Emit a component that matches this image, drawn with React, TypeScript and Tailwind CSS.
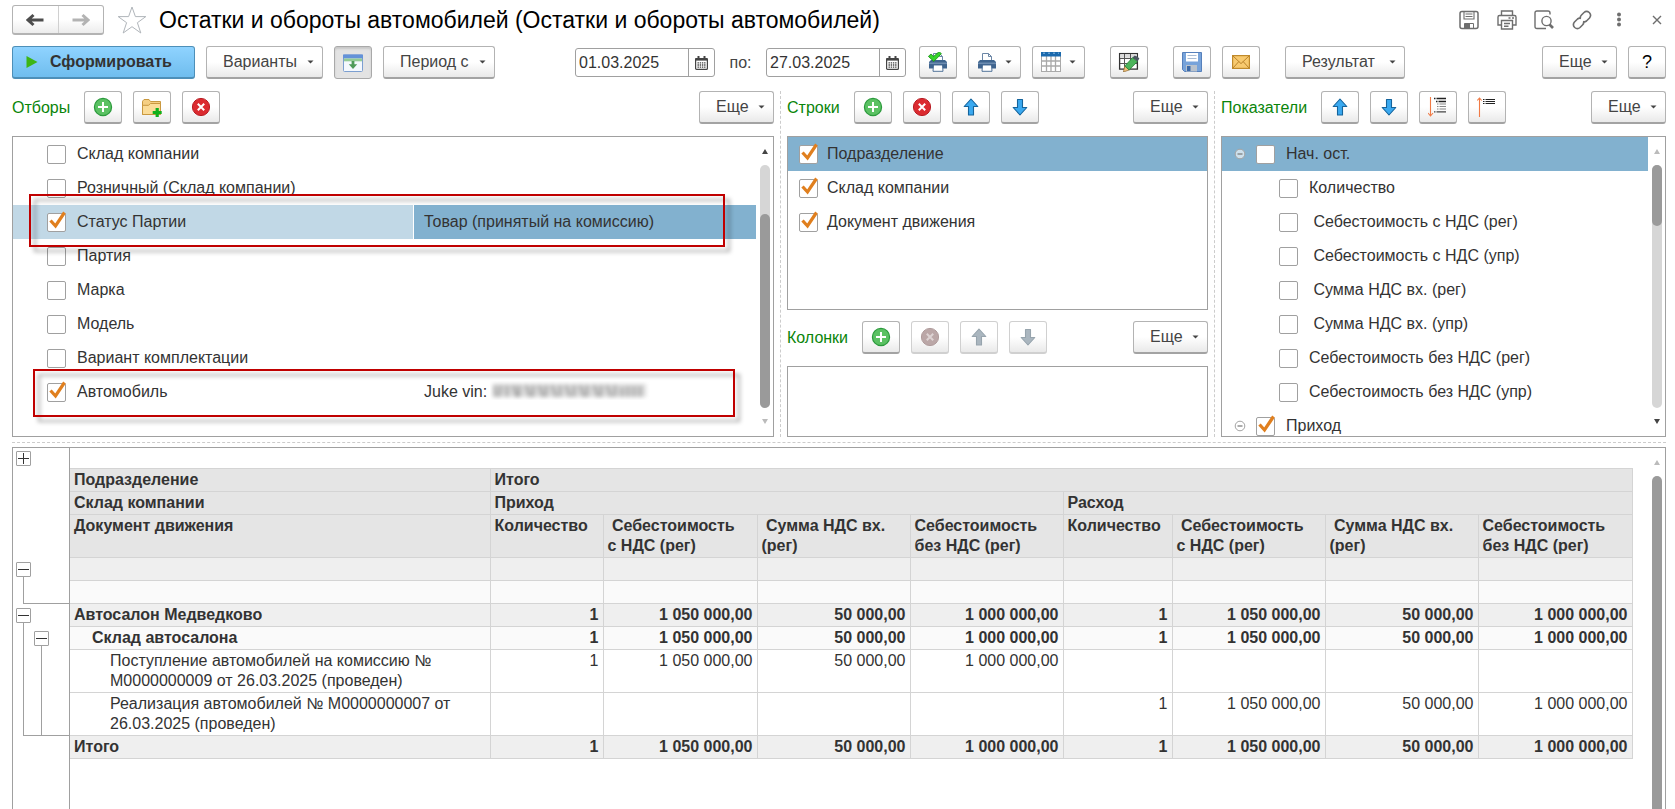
import type { ReactNode } from 'react';
import clsx from 'clsx';

const NBSP = '\u00a0';

/* ---------- icons ---------- */

function PlusIcon() {
  return (
    <svg width="20" height="20" viewBox="0 0 20 20" aria-hidden="true">
      <circle cx="10" cy="10" r="8.6" fill="#5bc163" stroke="#2b9a3c" strokeWidth="1.2" />
      <path d="M10 5V15M5 10H15" stroke="#fff" strokeWidth="2" />
    </svg>
  );
}

function DeleteIcon({ muted }: { muted?: boolean }) {
  return (
    <svg width="20" height="20" viewBox="0 0 20 20" aria-hidden="true">
      <circle
        cx="10"
        cy="10"
        r="8.6"
        fill={muted ? '#bba7a7' : '#db2b30'}
        stroke={muted ? '#b09c9c' : '#b81d24'}
        strokeWidth="1"
      />
      <path d="M6.8 6.8L13.2 13.2M13.2 6.8L6.8 13.2" stroke={muted ? '#ddd3d3' : '#fff'} strokeWidth="2" />
    </svg>
  );
}

function ArrowIcon({ down, muted }: { down?: boolean; muted?: boolean }) {
  return (
    <svg width="20" height="20" viewBox="0 0 20 20" aria-hidden="true">
      <path
        d={
          down
            ? 'M7.5 2.5H12.5V10.5H16.8L10 18L3.2 10.5H7.5Z'
            : 'M7.5 18H12.5V9.5H16.8L10 2L3.2 9.5H7.5Z'
        }
        fill={muted ? '#aab6bf' : '#3aa9f0'}
        stroke={muted ? '#97a4ad' : '#15649c'}
        strokeWidth="1.1"
        strokeLinejoin="round"
      />
    </svg>
  );
}

function FolderAddIcon() {
  return (
    <svg width="20" height="20" viewBox="0 0 20 20" aria-hidden="true">
      <path d="M0.5 17.5V4.2L2 2.5H7L8.5 4.5H18.5V17.5Z" fill="#f5cf83" stroke="#c9983f" />
      <path d="M0.5 17.5V8.3H6.5L8.5 6.5H18.5V17.5Z" fill="#fbdc98" stroke="#c9983f" />
      <path d="M15.2 11V20M10.7 15.5H19.7" stroke="#12b01c" strokeWidth="3.2" />
    </svg>
  );
}

function PanelDownIcon() {
  return (
    <svg width="20" height="20" viewBox="0 0 20 20" aria-hidden="true">
      <rect x="0.5" y="2" width="19" height="16.5" rx="1" fill="#f4f8fd" stroke="#7c9fd0" />
      <rect x="0" y="1.5" width="20" height="4" fill="#6492d8" />
      <rect x="1" y="5.5" width="18" height="2.8" fill="#93cb95" />
      <path d="M8.6 8H11.4V11.2H14.2L10 16L5.8 11.2H8.6Z" fill="#4f9a5a" />
    </svg>
  );
}

function CalendarIcon() {
  return (
    <svg width="13" height="14" viewBox="0 0 13 14" aria-hidden="true">
      <rect x="0.6" y="2.5" width="11.8" height="10.9" rx="1" fill="#fff" stroke="#444" strokeWidth="1.2" />
      <rect x="0.5" y="2" width="12" height="2.6" fill="#444" />
      <path d="M3.5 0V3M9.5 0V3" stroke="#444" strokeWidth="2" />
      <path d="M2.5 6.8H10.5M2.5 9H10.5M2.5 11.2H10.5" stroke="#444" strokeWidth="1.3" strokeDasharray="1.4 0.8" />
    </svg>
  );
}

function PrinterIcon({ check }: { check?: boolean }) {
  return (
    <svg width="20" height="20" viewBox="0 0 20 20" aria-hidden="true">
      <path d="M5.5 9V1.5H11.5L14.5 4.5V9" fill="#fff" stroke="#6b86a6" />
      <path d="M11.5 1.5V4.5H14.5" fill="none" stroke="#6b86a6" />
      <path d="M3 8H17L19 10V16.5H1V10Z" fill="#3f648e" />
      <rect x="1" y="10.5" width="18" height="1.6" fill="#6d8cb0" />
      <path d="M5.5 13H14.5L15 19.3H5Z" fill="#fff" stroke="#3f648e" strokeWidth="0.9" />
      {check && (
        <path d="M0.4 4.4L3 2L5.6 4.4L11.2 -0.4L13.4 1.8L5.8 9.4Z" fill="#35d32a" stroke="#148d12" strokeWidth="0.8" />
      )}
    </svg>
  );
}

function TableIcon() {
  return (
    <svg width="20" height="20" viewBox="0 0 20 20" aria-hidden="true">
      <rect x="0.5" y="0.5" width="19" height="19" fill="#fff" stroke="#a9a9a9" />
      <path d="M5.5 4V20M10 4V20M14.5 4V20M0 9H20M0 14H20" stroke="#a9a9a9" strokeWidth="1.3" />
      <rect x="0" y="0" width="20" height="4.5" fill="#1a69ad" />
      <path d="M2 1.2H18" stroke="#8bb9e0" strokeDasharray="2 3" />
    </svg>
  );
}

function TableEditIcon() {
  return (
    <svg width="22" height="20" viewBox="0 0 22 20" aria-hidden="true">
      <rect x="1.6" y="1.6" width="17.8" height="15.5" fill="#fff" stroke="#333" strokeWidth="1.3" />
      <rect x="2.2" y="2.2" width="16.6" height="3.6" fill="#dcdcdc" />
      <path d="M2 6.5H19M2 11.5H19M6.5 2V17M12.5 2V17" stroke="#555" />
      <path d="M5.4 20L6.8 14L11.2 18Z" fill="#f2c078" stroke="#8d6a34" strokeWidth="0.7" />
      <path d="M6.8 14L14.6 5.6L19.4 9.6L11.2 18Z" fill="#4cb45b" stroke="#2b7f39" strokeWidth="0.8" />
      <path d="M14.6 5.6L16.4 3.8Q19 3.4 21.4 6.6L19.4 9.6Z" fill="#4a5560" />
    </svg>
  );
}

function DisketteIcon() {
  return (
    <svg width="20" height="20" viewBox="0 0 20 20" aria-hidden="true">
      <path d="M0.5 0.5H19.5V19.5H2.5L0.5 17.5Z" fill="#77a3da" stroke="#5680bb" />
      <rect x="4" y="1" width="12" height="8.5" fill="#fff" />
      <path d="M5.5 3.5H14.5M5.5 6.5H14.5" stroke="#a9bcd4" />
      <rect x="4" y="13" width="11" height="6.5" fill="#b9c2cc" />
      <rect x="5" y="14" width="3.5" height="5" fill="#3d6aa8" />
    </svg>
  );
}

function MailIcon() {
  return (
    <svg width="18" height="14" viewBox="0 0 18 14" aria-hidden="true">
      <rect x="0.6" y="0.6" width="16.8" height="12.8" fill="#f8ca6f" stroke="#c08a2b" strokeWidth="1.2" />
      <path d="M0.8 0.8L9 8.6L17.2 0.8M0.8 13.2L6.8 6.6M17.2 13.2L11.2 6.6" fill="none" stroke="#b9822a" />
    </svg>
  );
}

function ExpandLevelsIcon() {
  return (
    <svg width="20" height="20" viewBox="0 0 20 20" aria-hidden="true">
      <path d="M2.5 0V19M0 16L2.5 19L5 16" fill="none" stroke="#f07a45" strokeWidth="1.1" />
      <path d="M6 1.5H7.5M8.5 1.5H18M8 4.5H9.5M10.5 4.5H18" stroke="#222" strokeWidth="1.3" />
      <path d="M9 7H10.5M11.5 7H18M9 9.5H10.5M11.5 9.5H18M9 12H10.5M11.5 12H18" stroke="#888" strokeWidth="1.2" />
      <path d="M6 14.8H7.5M8.5 14.8H18" stroke="#444" strokeWidth="1.2" />
    </svg>
  );
}

function CollapseLevelsIcon() {
  return (
    <svg width="20" height="20" viewBox="0 0 20 20" aria-hidden="true">
      <path d="M2.5 20V1M0.3 3.5L2.5 1L4.7 3.5" fill="none" stroke="#f07a45" strokeWidth="1.1" />
      <path d="M6 2.5H7.5M8.5 2.5H18M6 4.5H7.5M8.5 4.5H18M6 6.5H7.5M8.5 6.5H18" stroke="#222" strokeWidth="1" />
    </svg>
  );
}

function CollapseDot() {
  return (
    <svg width="12" height="12" viewBox="0 0 12 12" aria-hidden="true">
      <circle cx="6" cy="6" r="4.8" fill="#fff" fillOpacity="0.6" stroke="#a3a3a3" />
      <path d="M3.5 6H8.5" stroke="#777" strokeWidth="1.2" />
    </svg>
  );
}

function Caret() {
  return (
    <svg width="7" height="4" viewBox="0 0 7 4" aria-hidden="true">
      <path d="M0.5 0.5H6.5L3.5 3.5Z" fill="#444" />
    </svg>
  );
}

/* ---------- controls ---------- */

function Button({
  children,
  label,
  width = 'w-[38px]',
  menu,
  muted,
}: {
  children: ReactNode;
  label?: string;
  width?: string;
  menu?: boolean;
  muted?: boolean;
}) {
  return (
    <button
      type="button"
      aria-label={label}
      disabled={muted}
      className={clsx(
        'flex h-[33px] shrink-0 items-center rounded-[3px] border border-b-2 bg-linear-to-b from-white from-50% to-[#e9e9e9] text-[#444]',
        width,
        menu ? 'justify-between pr-2 pl-4' : 'justify-center',
        muted ? 'border-[#d0d0d0]' : 'border-[#b3b3b3] border-b-[#a3a3a3]',
      )}
    >
      {children}
      {menu && <Caret />}
    </button>
  );
}

function MoreButton() {
  return (
    <Button width="w-[75px]" menu>
      Еще
    </Button>
  );
}

function IconMenuButton({ children, label }: { children: ReactNode; label: string }) {
  return (
    <button
      type="button"
      aria-label={label}
      className="flex h-[33px] w-[53px] shrink-0 items-center justify-between rounded-[3px] border border-b-2 border-[#b3b3b3] border-b-[#a3a3a3] bg-linear-to-b from-white from-50% to-[#e9e9e9] pr-2 pl-2"
    >
      {children}
      <Caret />
    </button>
  );
}

function DateField({ value, label }: { value: string; label: string }) {
  return (
    <div className="flex h-[29px] w-[140px] shrink-0 rounded-[3px] border border-[#a0a0a0] bg-white">
      <input type="text" aria-label={label} defaultValue={value} className="w-0 flex-1 px-[3px] text-[#333] outline-none" />
      <button type="button" aria-label="Календарь" className="flex w-[26px] items-center justify-center border-l border-[#a0a0a0]">
        <CalendarIcon />
      </button>
    </div>
  );
}

function Checkbox({ id, checked }: { id: string; checked?: boolean }) {
  return (
    <span className="relative flex size-[19px] shrink-0">
      <input
        id={id}
        type="checkbox"
        defaultChecked={checked}
        className="peer size-[19px] appearance-none rounded-[2px] border border-[#a0a0a0] bg-white"
      />
      <svg
        width="19"
        height="21"
        viewBox="0 0 19 21"
        aria-hidden="true"
        className="pointer-events-none absolute bottom-0 left-0 hidden peer-checked:block"
      >
        <path d="M3.5 9.5L8.5 15L17.5 1.5" fill="none" stroke="#e07f1e" strokeWidth="3.2" />
      </svg>
    </span>
  );
}

function Scrollbar({
  thumb,
  up,
  down,
}: {
  thumb: string;
  up?: boolean;
  down?: boolean;
}) {
  return (
    <div className="flex w-[17px] shrink-0 flex-col items-center pt-3 pb-3" aria-hidden="true">
      <svg width="6" height="5" viewBox="0 0 6 5">
        <path d="M3 0L6 5H0Z" fill={up ? '#444' : '#bbb'} />
      </svg>
      <div className="my-[11px] flex w-[10px] flex-1 flex-col rounded-full bg-[#d6d6d6]">
        <div className={clsx('rounded-full bg-[#9a9a9a]', thumb)} />
      </div>
      <svg width="6" height="5" viewBox="0 0 6 5">
        <path d="M3 5L6 0H0Z" fill={down ? '#444' : '#bbb'} />
      </svg>
    </div>
  );
}

function SectionTitle({ children }: { children: ReactNode }) {
  return <h2 className="shrink-0 text-[#0a850a]">{children}</h2>;
}

/* ---------- header ---------- */

function TitleBar() {
  return (
    <header className="flex items-center pt-[5px]">
      <div className="flex h-[30px] w-[92px] rounded-[3px] border border-b-2 border-[#b3b3b3] bg-linear-to-b from-white from-50% to-[#ececec]">
        <button type="button" aria-label="Назад" className="flex flex-1 items-center justify-center border-r border-[#d0d0d0]">
          <svg width="18" height="14" viewBox="0 0 18 14" aria-hidden="true">
            <path d="M17.5 7H3M7.5 2L2 7L7.5 12" fill="none" stroke="#4d4d4d" strokeWidth="3" />
          </svg>
        </button>
        <button type="button" aria-label="Вперед" className="flex flex-1 items-center justify-center">
          <svg width="18" height="14" viewBox="0 0 18 14" aria-hidden="true">
            <path d="M0.5 7H15M10.5 2L16 7L10.5 12" fill="none" stroke="#b3b3b3" strokeWidth="3" />
          </svg>
        </button>
      </div>
      <button type="button" aria-label="Избранное" className="ml-[13px]">
        <svg width="30" height="30" viewBox="0 0 30 30" aria-hidden="true">
          <path
            d="M15 2L18.4 11.6H28.8L20.4 17.7L23.8 28L15 21.7L6.2 28L9.6 17.7L1.2 11.6H11.6Z"
            fill="#fff"
            stroke="#b0b5ba"
          />
        </svg>
      </button>
      <h1 className="ml-3 text-[23px] leading-[30px] text-black">
        Остатки и обороты автомобилей (Остатки и обороты автомобилей)
      </h1>
      <div className="ml-auto flex items-center text-[#6e6e6e]">
        <button type="button" aria-label="Сохранить">
          <svg width="20" height="20" viewBox="0 0 20 20" fill="none" stroke="currentColor" aria-hidden="true">
            <rect x="1" y="1.5" width="18" height="17" rx="2" strokeWidth="1.5" />
            <path d="M5 2V9H15V2M6.5 4H13.5M6.5 6.5H13.5" strokeWidth="1.1" />
            <path d="M5.5 18V13.5H14.5V18" />
            <rect x="6" y="14" width="4.5" height="4" fill="currentColor" />
          </svg>
        </button>
        <button type="button" aria-label="Печать" className="ml-[18px]">
          <svg width="20" height="20" viewBox="0 0 20 20" fill="none" stroke="currentColor" strokeWidth="1.4" aria-hidden="true">
            <path d="M4.5 5V1H15.5V5" />
            <path d="M4.5 15H1V7Q1 5.5 2.5 5.5H17.5Q19 5.5 19 7V15H15.5" />
            <path d="M4.5 10.5H15.5V19H4.5ZM7 13.5H13M7 16.2H11.5M11.5 8H13.5M15 8H17" />
          </svg>
        </button>
        <button type="button" aria-label="Просмотр" className="ml-[17px]">
          <svg width="20" height="20" viewBox="0 0 20 20" fill="none" stroke="currentColor" strokeWidth="1.4" aria-hidden="true">
            <path d="M12 18.5H3Q1 18.5 1 16.5V3Q1 1 3 1H14Q16 1 16 3V4.5" />
            <circle cx="12.5" cy="11" r="4.6" />
            <path d="M15.5 14.5L19 18" strokeWidth="2.6" />
          </svg>
        </button>
        <button type="button" aria-label="Ссылка" className="ml-[18px]">
          <svg width="20" height="20" viewBox="0 0 20 20" fill="none" stroke="currentColor" strokeWidth="1.6" aria-hidden="true">
            <path d="M8.3 8.2Q8 6.5 9.5 5L12 2.5Q14.5 0.2 17.3 2.5Q19.8 5.2 17.5 8L14.5 11Q12.8 12.3 11 11.6" />
            <path d="M11.7 11.8Q12 13.5 10.5 15L8 17.5Q5.5 19.8 2.7 17.5Q0.2 14.8 2.5 12L5.5 9Q7.2 7.7 9 8.4" />
          </svg>
        </button>
        <button type="button" aria-label="Меню" className="ml-6">
          <svg width="6" height="16" viewBox="0 0 6 16" fill="currentColor" aria-hidden="true">
            <circle cx="3" cy="2.5" r="2" />
            <circle cx="3" cy="7.5" r="2" />
            <circle cx="3" cy="12.5" r="2" />
          </svg>
        </button>
        <button type="button" aria-label="Закрыть" className="mr-1 ml-[30px]">
          <svg width="10" height="10" viewBox="0 0 10 10" stroke="currentColor" strokeWidth="1.4" aria-hidden="true">
            <path d="M1 1L9 9M9 1L1 9" />
          </svg>
        </button>
      </div>
    </header>
  );
}

function Toolbar() {
  return (
    <div className="mt-[11px] flex items-center">
      <button
        type="button"
        className="flex h-[33px] w-[183px] shrink-0 items-center rounded-[3px] border border-b-2 border-[#4d8fb8] bg-linear-to-b from-[#8fd3ff] to-[#6fbdee] pl-[13px] font-bold text-[#333]"
      >
        <svg width="12" height="14" viewBox="0 0 12 14" aria-hidden="true">
          <path d="M0.5 1L11.5 7L0.5 13Z" fill="#3db515" />
        </svg>
        <span className="ml-3">Сформировать</span>
      </button>
      <div className="ml-[11px] flex gap-[11px]">
        <Button width="w-[117px]" menu>
          Варианты
        </Button>
        <button
          type="button"
          aria-label="Показать настройки"
          className="flex h-[33px] w-[38px] items-center justify-center rounded-[3px] border border-[#a9a9a9] bg-[#e3e3e3] shadow-[inset_0_2px_2px_#c8c8c8]"
        >
          <PanelDownIcon />
        </button>
        <Button width="w-[112px]" menu>
          Период с
        </Button>
      </div>
      <div className="ml-20 flex items-center">
        <DateField value="01.03.2025" label="Период с" />
        <span className="w-[51px] text-center text-[#444]">по:</span>
        <DateField value="27.03.2025" label="Период по" />
      </div>
      <div className="ml-[13px] flex gap-[11px]">
        <Button label="Быстрая печать">
          <PrinterIcon check />
        </Button>
        <IconMenuButton label="Печать">
          <PrinterIcon />
        </IconMenuButton>
        <IconMenuButton label="Таблица">
          <TableIcon />
        </IconMenuButton>
      </div>
      <div className="ml-[25px] flex">
        <Button label="Редактировать">
          <TableEditIcon />
        </Button>
      </div>
      <div className="ml-[25px] flex gap-[11px]">
        <Button label="Сохранить">
          <DisketteIcon />
        </Button>
        <Button label="Отправить">
          <MailIcon />
        </Button>
      </div>
      <div className="ml-[25px] flex">
        <Button width="w-[120px]" menu>
          Результат
        </Button>
      </div>
      <div className="ml-auto flex gap-[11px]">
        <MoreButton />
        <Button label="Справка">
          <span className="text-[18px] text-black">?</span>
        </Button>
      </div>
    </div>
  );
}

/* ---------- settings panels ---------- */

interface FilterItem {
  name: string;
  checked?: boolean;
  selected?: boolean;
  value?: string;
  masked?: boolean;
}

const filters: FilterItem[] = [
  { name: 'Склад компании' },
  { name: 'Розничный (Склад компании)' },
  { name: 'Статус Партии', checked: true, selected: true, value: 'Товар (принятый на комиссию)' },
  { name: 'Партия' },
  { name: 'Марка' },
  { name: 'Модель' },
  { name: 'Вариант комплектации' },
  { name: 'Автомобиль', checked: true, value: 'Juke vin:', masked: true },
];

function MaskedVin() {
  return (
    <svg width="160" height="22" viewBox="0 0 160 22" className="ml-[3px]" aria-hidden="true">
      <defs>
        <filter id="vin-blur" x="-5%" y="-20%" width="110%" height="140%">
          <feGaussianBlur stdDeviation="2" />
        </filter>
      </defs>
      <g filter="url(#vin-blur)">
        <rect x="3" y="3" width="153" height="13" fill="#dadada" />
        <path
          d="M5 4V16M11 4L9 16M17 4V16M23 4L27 16M29 4V16M36 4L40 16M43 4V16M49 4L53 16M56 4V16M62 4L66 16M70 4V16M76 4L80 16M84 4V16M90 4L94 16M97 4V16M104 4L108 16M111 4V16M117 4L121 16M125 4V16M132 6V16M138 5V16M144 5V16M150 5V16"
          stroke="#999"
          strokeWidth="2.4"
        />
      </g>
    </svg>
  );
}

function FiltersPanel() {
  return (
    <section className="flex flex-col">
      <div className="flex items-center">
        <SectionTitle>Отборы</SectionTitle>
        <div className="ml-[14px] flex gap-[11px]">
          <Button label="Добавить">
            <PlusIcon />
          </Button>
          <Button label="Добавить группу">
            <FolderAddIcon />
          </Button>
          <Button label="Удалить">
            <DeleteIcon />
          </Button>
        </div>
        <div className="ml-auto">
          <MoreButton />
        </div>
      </div>
      <div className="relative mt-3 flex h-[301px] border border-[#a0a0a0]">
        <ul className="min-w-0 flex-1">
          {filters.map((item, index) => (
            <li key={item.name} className="grid h-[34px] grid-cols-[400fr_343fr]">
              <div className={clsx('flex items-center pl-[34px]', item.selected && 'bg-[#c1d8e6]')}>
                <Checkbox id={`filter-${index}`} checked={item.checked} />
                <label htmlFor={`filter-${index}`} className="ml-[11px]">
                  {item.name}
                </label>
              </div>
              <div
                className={clsx(
                  'flex items-center border-l border-white pl-[10px]',
                  item.selected && 'bg-[#82b1cf]',
                )}
              >
                {item.value}
                {item.masked && <MaskedVin />}
              </div>
            </li>
          ))}
        </ul>
        <Scrollbar thumb="mt-auto h-4/5" up />
        {/* highlight frames drawn over the list */}
        <div className="pointer-events-none absolute top-[57px] right-12 left-4 h-[53px] border-2 border-[#c00000] drop-shadow-[5px_5px_2px_rgba(0,0,0,0.35)]" />
        <div className="pointer-events-none absolute top-[232px] right-[38px] left-5 h-12 border-2 border-[#c00000] drop-shadow-[5px_5px_2px_rgba(0,0,0,0.35)]" />
      </div>
    </section>
  );
}

const rowFields = ['Подразделение', 'Склад компании', 'Документ движения'];

function RowsPanel() {
  return (
    <section className="flex flex-col">
      <div className="flex items-center">
        <SectionTitle>Строки</SectionTitle>
        <div className="ml-[14px] flex gap-[11px]">
          <Button label="Добавить строку">
            <PlusIcon />
          </Button>
          <Button label="Удалить строку">
            <DeleteIcon />
          </Button>
          <Button label="Выше">
            <ArrowIcon />
          </Button>
          <Button label="Ниже">
            <ArrowIcon down />
          </Button>
        </div>
        <div className="ml-auto">
          <MoreButton />
        </div>
      </div>
      <ul className="mt-3 h-[174px] border border-[#a0a0a0]">
        {rowFields.map((name, index) => (
          <li key={name} className={clsx('flex h-[34px] items-center pl-[11px]', index === 0 && 'bg-[#82b1cf]')}>
            <Checkbox id={`row-${index}`} checked />
            <label htmlFor={`row-${index}`} className="ml-[9px]">
              {name}
            </label>
          </li>
        ))}
      </ul>
      <div className="mt-[11px] flex items-center">
        <SectionTitle>Колонки</SectionTitle>
        <div className="ml-[14px] flex gap-[11px]">
          <Button label="Добавить колонку">
            <PlusIcon />
          </Button>
          <Button label="Удалить колонку" muted>
            <DeleteIcon muted />
          </Button>
          <Button label="Колонка выше" muted>
            <ArrowIcon muted />
          </Button>
          <Button label="Колонка ниже" muted>
            <ArrowIcon down muted />
          </Button>
        </div>
        <div className="ml-auto">
          <MoreButton />
        </div>
      </div>
      <div className="mt-3 flex-1 border border-[#a0a0a0]" />
    </section>
  );
}

const indicators = [
  { name: 'Нач. ост.', group: true, selected: true },
  { name: 'Количество' },
  { name: NBSP + 'Себестоимость с НДС (рег)' },
  { name: NBSP + 'Себестоимость с НДС (упр)' },
  { name: NBSP + 'Сумма НДС вх. (рег)' },
  { name: NBSP + 'Сумма НДС вх. (упр)' },
  { name: 'Себестоимость без НДС (рег)' },
  { name: 'Себестоимость без НДС (упр)' },
  { name: 'Приход', group: true, checked: true },
];

function IndicatorsPanel() {
  return (
    <section className="flex flex-col">
      <div className="flex items-center">
        <SectionTitle>Показатели</SectionTitle>
        <div className="ml-[14px] flex gap-[11px]">
          <Button label="Показатель выше">
            <ArrowIcon />
          </Button>
          <Button label="Показатель ниже">
            <ArrowIcon down />
          </Button>
          <Button label="Развернуть">
            <ExpandLevelsIcon />
          </Button>
          <Button label="Свернуть">
            <CollapseLevelsIcon />
          </Button>
        </div>
        <div className="ml-auto">
          <MoreButton />
        </div>
      </div>
      <div className="mt-3 flex h-[301px] border border-[#a0a0a0]">
        <ul className="min-w-0 flex-1 overflow-hidden">
          {indicators.map((item, index) => (
            <li
              key={item.name}
              className={clsx(
                'flex h-[34px] items-center',
                item.group ? 'pl-3' : 'pl-[57px]',
                item.selected && 'bg-[#82b1cf]',
              )}
            >
              {item.group && (
                <span className="mr-[10px]">
                  <CollapseDot />
                </span>
              )}
              <Checkbox id={`indicator-${index}`} checked={item.checked} />
              <label htmlFor={`indicator-${index}`} className="ml-[11px]">
                {item.name}
              </label>
            </li>
          ))}
        </ul>
        <Scrollbar thumb="h-1/4" down />
      </div>
    </section>
  );
}

/* ---------- report ---------- */

const headings = [
  'Количество',
  `${NBSP}Себестоимость с${NBSP}НДС (рег)`,
  `${NBSP}Сумма НДС вх. (рег)`,
  'Себестоимость без НДС (рег)',
];

const sums = ['1', '1 050 000,00', '50 000,00', '1 000 000,00'];
const none = ['', '', '', ''];

const reportRows = [
  { name: '', cells: [...none, ...none], style: 'bg-[#efefef]', indent: 'pl-1' },
  { name: '', cells: [...none, ...none], style: 'bg-[#fafafa]', indent: 'pl-1' },
  { name: 'Автосалон Медведково', cells: [...sums, ...sums], style: 'bg-[#efefef] font-bold', indent: 'pl-1' },
  { name: 'Склад автосалона', cells: [...sums, ...sums], style: 'bg-[#fafafa] font-bold', indent: 'pl-[22px]' },
  {
    name: 'Поступление автомобилей на комиссию № М0000000009 от 26.03.2025 (проведен)',
    cells: [...sums, ...none],
    style: 'bg-white',
    indent: 'pl-10',
  },
  {
    name: 'Реализация автомобилей № М0000000007 от 26.03.2025 (проведен)',
    cells: [...none, ...sums],
    style: 'bg-white',
    indent: 'pl-10',
  },
  { name: 'Итого', cells: [...sums, ...sums], style: 'bg-[#efefef] font-bold', indent: 'pl-1' },
];

const cell = 'h-[23px] border border-[#d4d4d4] px-1 py-px align-top';

function TreeToggle({ plus }: { plus?: boolean }) {
  return (
    <button
      type="button"
      aria-label={plus ? 'Развернуть группу' : 'Свернуть группу'}
      className="flex size-[15px] items-center justify-center rounded-[1px] border border-[#a0a0a0] bg-white"
    >
      <svg width="11" height="11" viewBox="0 0 11 11" aria-hidden="true">
        <path d={plus ? 'M0 5.5H11M5.5 0V11' : 'M0 5.5H11'} stroke="#333" />
      </svg>
    </button>
  );
}

function TreeGutter() {
  return (
    <div className="w-[57px] shrink-0 border-r border-[#a0a0a0] pt-[3px] pl-[3px]">
      <TreeToggle plus />
      <div className="mt-24">
        <TreeToggle />
        <div className="ml-[7px] h-[27px] border-b border-l border-[#a0a0a0]" />
      </div>
      <div className="mt-1">
        <TreeToggle />
        <div className="ml-[7px] flex h-[113px] flex-col border-b border-l border-[#a0a0a0] pt-2 pl-[10px]">
          <TreeToggle />
          <div className="ml-[7px] flex-1 border-l border-[#a0a0a0]" />
        </div>
      </div>
    </div>
  );
}

function Report() {
  return (
    <section className="mt-1 flex min-h-0 flex-1 overflow-hidden border border-b-0 border-[#a0a0a0]">
      <TreeGutter />
      <div className="min-w-0 flex-1 pt-5 pr-4">
        <table className="w-full table-fixed border-collapse text-left leading-5">
          <colgroup>
            <col className="w-[420px]" />
            <col className="w-[113px]" />
            <col className="w-[154px]" />
            <col className="w-[153px]" />
            <col className="w-[153px]" />
            <col className="w-[109px]" />
            <col className="w-[153px]" />
            <col className="w-[153px]" />
            <col className="w-[154px]" />
          </colgroup>
          <thead className="bg-[#e5e5e5]">
            <tr>
              <th className={clsx(cell, 'border-l-0')}>Подразделение</th>
              <th colSpan={8} className={cell}>
                Итого
              </th>
            </tr>
            <tr>
              <th className={clsx(cell, 'border-l-0')}>Склад компании</th>
              <th colSpan={4} className={cell}>
                Приход
              </th>
              <th colSpan={4} className={cell}>
                Расход
              </th>
            </tr>
            <tr>
              <th className={clsx(cell, 'border-l-0')}>Документ движения</th>
              {[...headings, ...headings].map((name, index) => (
                <th key={index} className={cell}>
                  {name}
                </th>
              ))}
            </tr>
          </thead>
          <tbody>
            {reportRows.map((row, index) => (
              <tr key={index} className={row.style}>
                <td className="h-[23px] border border-l-0 border-[#d4d4d4] py-px pr-1 align-top">
                  <div className={row.indent}>{row.name}</div>
                </td>
                {row.cells.map((value, column) => (
                  <td key={column} className={clsx(cell, 'text-right')}>
                    {value}
                  </td>
                ))}
              </tr>
            ))}
          </tbody>
        </table>
      </div>
      <div className="flex w-[17px] shrink-0 flex-col items-center pt-3" aria-hidden="true">
        <svg width="6" height="5" viewBox="0 0 6 5">
          <path d="M3 0L6 5H0Z" fill="#bbb" />
        </svg>
        <div className="mt-[11px] w-[10px] flex-1 rounded-t-full bg-[#9a9a9a]" />
      </div>
    </section>
  );
}

export default function App() {
  return (
    <main className="flex h-screen flex-col overflow-hidden bg-white pr-[9px] pl-3 font-['Liberation_Sans',Arial,sans-serif] text-[16px] leading-5 text-[#333]">
      <TitleBar />
      <Toolbar />
      <div className="mt-3 grid grid-cols-[762fr_13px_421fr_13px_445fr]">
        <FiltersPanel />
        <div className="mx-auto border-l border-dashed border-[#ccc]" />
        <RowsPanel />
        <div className="mx-auto border-l border-dashed border-[#ccc]" />
        <IndicatorsPanel />
      </div>
      <div className="mt-[5px] border-t border-dashed border-[#ccc]" />
      <Report />
    </main>
  );
}
